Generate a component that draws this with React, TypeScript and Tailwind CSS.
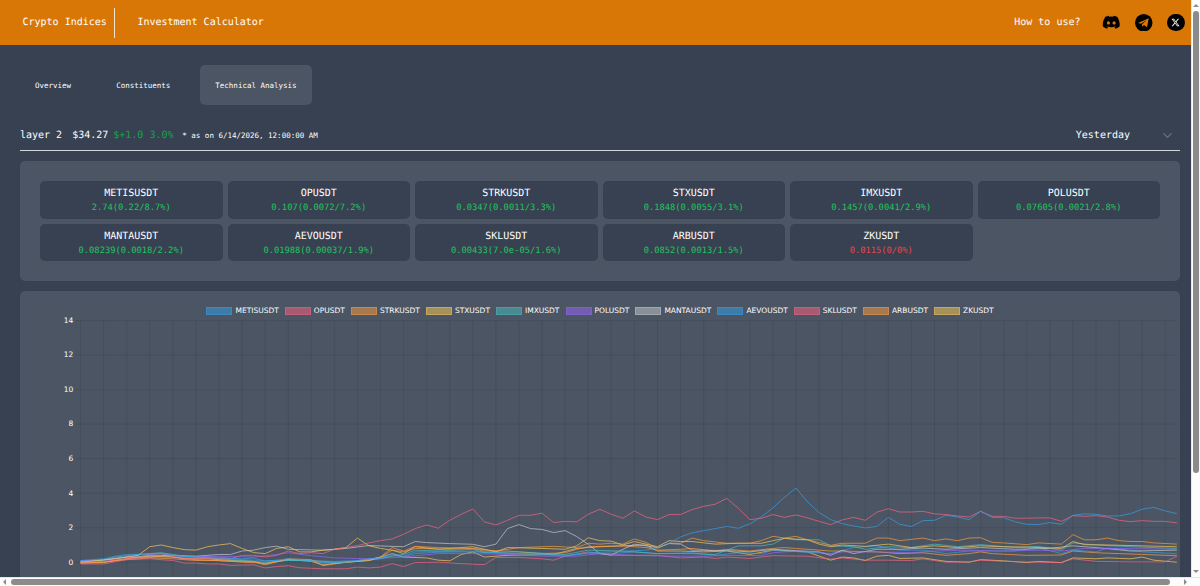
import React, { useState } from "react";
import clsx from "clsx";
import { FaDiscord, FaXTwitter } from "react-icons/fa6";
import { FiChevronDown } from "react-icons/fi";

type Coin = {
  symbol: string;
  value: string;
  up: boolean;
};

type Series = {
  symbol: string;
  color: string;
  // [sample index, percent change]
  points: [number, number][];
};

const coins: Coin[] = [
  { symbol: "METISUSDT", value: "2.74(0.22/8.7%)", up: true },
  { symbol: "OPUSDT", value: "0.107(0.0072/7.2%)", up: true },
  { symbol: "STRKUSDT", value: "0.0347(0.0011/3.3%)", up: true },
  { symbol: "STXUSDT", value: "0.1848(0.0055/3.1%)", up: true },
  { symbol: "IMXUSDT", value: "0.1457(0.0041/2.9%)", up: true },
  { symbol: "POLUSDT", value: "0.07605(0.0021/2.8%)", up: true },
  { symbol: "MANTAUSDT", value: "0.08239(0.0018/2.2%)", up: true },
  { symbol: "AEVOUSDT", value: "0.01988(0.00037/1.9%)", up: true },
  { symbol: "SKLUSDT", value: "0.00433(7.0e-05/1.6%)", up: true },
  { symbol: "ARBUSDT", value: "0.0852(0.0013/1.5%)", up: true },
  { symbol: "ZKUSDT", value: "0.0115(0/0%)", up: false },
];

const series: Series[] = [
  {
    symbol: "METISUSDT",
    color: "#36a2eb",
    points: [
      [0, 0.1], [2, 0.2], [3, 0.35], [4, 0.45], [6, 0.48], [7, 0.5], [8, 0.4], [10, 0.3], [12, 0.25], [14, 0.2],
      [15, 0.25], [16, 0.05], [18, 0.2], [20, 0.1], [21, -0.02], [23, 0], [25, 0.2], [26, 0.25], [27, 0.5], [28, 0.35],
      [29, 0.6], [32, 0.62], [34, 0.65], [36, 0.55], [40, 0.45], [42, 0.35], [44, 0.55], [46, 0.6], [49, 0.7], [50, 0.85],
      [51, 1.1], [52, 1.47], [53, 1.7], [54, 1.83], [55, 1.95], [56, 2.07], [57, 1.97], [58, 2.22], [59, 2.63], [60, 3.15],
      [61, 3.76], [62, 4.3], [63, 3.5], [64, 2.88], [65, 2.47], [66, 2.24], [67, 2.1], [68, 1.99], [69, 2.07], [70, 2.6],
      [71, 2.2], [72, 2.07], [73, 2.41], [74, 2.43], [75, 2.72], [76, 2.62], [77, 2.47], [78, 2.95], [79, 2.6], [80, 2.58],
      [81, 2.34], [82, 2.2], [83, 2.18], [84, 2.3], [85, 2.2], [86, 2.72], [87, 2.8], [88, 2.78], [89, 2.68], [90, 2.68],
      [91, 2.82], [92, 3.07], [93, 3.18], [94, 2.97], [95, 2.82],
    ],
  },
  {
    symbol: "OPUSDT",
    color: "#ff6384",
    points: [
      [0, 0], [2, 0.05], [4, 0.2], [5, 0.25], [6, 0.5], [7, 0.5], [9, 0.2], [10, 0.2], [13, 0.2], [14, 0.4], [15, 0.4],
      [16, 0.3], [17, 0.4], [18, 0.65], [19, 0.5], [20, 0.55], [21, 0.5], [22, 0.75], [23, 0.85], [24, 0.97], [25, 1.12],
      [26, 1.25], [27, 1.35], [28, 1.62], [29, 1.95], [30, 2.16], [31, 1.97], [32, 2.43], [33, 2.78], [34, 3.09], [35, 2.34],
      [36, 2.16], [37, 2.43], [38, 2.72], [39, 2.72], [40, 2.84], [41, 2.3], [42, 2.37], [43, 2.34], [44, 2.78], [45, 3.07],
      [46, 2.78], [47, 2.55], [48, 2.97], [49, 2.62], [50, 2.47], [51, 2.76], [52, 2.76], [53, 3.05], [54, 3.24], [55, 3.36],
      [56, 3.7], [57, 3.13], [58, 2.47], [59, 2.55], [60, 2.76], [61, 2.6], [62, 2.74], [63, 2.57], [64, 2.37], [65, 2.18],
      [66, 2.45], [67, 2.6], [68, 2.43], [69, 2.9], [70, 3.1], [71, 2.91], [72, 2.91], [73, 2.95], [74, 2.8], [75, 2.76],
      [76, 2.68], [77, 2.62], [78, 2.95], [79, 2.66], [80, 2.66], [81, 2.55], [82, 2.55], [83, 2.57], [84, 2.57], [85, 2.37],
      [86, 2.7], [87, 2.66], [88, 2.7], [89, 2.62], [90, 2.43], [91, 2.35], [92, 2.41], [93, 2.37], [94, 2.37], [95, 2.28],
    ],
  },
  {
    symbol: "STRKUSDT",
    color: "#ff9f40",
    points: [
      [0, -0.05], [2, -0.02], [4, 0.2], [6, 0.35], [8, 0.3], [10, 0.15], [13, 0.05], [15, 0.02], [16, -0.15], [18, 0.2],
      [20, 0.15], [21, -0.2], [23, 0], [25, 0.1], [26, 0.3], [27, 0.85], [28, 0.65], [29, 0.92], [31, 0.85], [34, 0.8],
      [36, 0.65], [38, 0.85], [41, 0.92], [43, 0.85], [44, 1.1], [45, 1.05], [46, 1.1], [47, 1.05], [48, 1.35], [49, 1.15],
      [50, 0.8], [51, 1.1], [52, 1.1], [53, 1.4], [54, 1.25], [56, 1.1], [58, 1.1], [59, 1.25], [60, 1.5], [61, 1.4],
      [62, 1.5], [63, 1.3], [65, 0.98], [66, 1.1], [68, 1.1], [69, 1.4], [70, 1.4], [71, 1.25], [73, 1.4], [74, 1.25],
      [75, 1.35], [76, 1.25], [77, 1.4], [78, 1.42], [79, 1.15], [80, 1.12], [82, 1.02], [83, 1.12], [85, 1.05], [86, 1.6],
      [87, 1.3], [88, 1.3], [89, 1.4], [90, 1.25], [91, 1.2], [92, 1.2], [93, 1.12], [95, 1.05],
    ],
  },
  {
    symbol: "STXUSDT",
    color: "#ffcd56",
    points: [
      [0, 0], [3, 0.2], [5, 0.4], [6, 0.9], [7, 1], [8, 0.85], [9, 0.73], [10, 0.7], [11, 0.9], [12, 1], [13, 1.08],
      [14, 0.8], [15, 0.56], [16, 0.5], [17, 0.8], [18, 0.9], [19, 0.6], [20, 0.6], [21, 0.7], [22, 0.75], [23, 0.85],
      [24, 1.4], [25, 0.95], [26, 0.8], [27, 0.7], [28, 0.5], [29, 0.9], [31, 0.75], [34, 0.9], [36, 0.6], [37, 0.85],
      [40, 0.8], [42, 0.75], [43, 0.95], [44, 1.42], [45, 1.25], [46, 1.22], [47, 1], [48, 1.2], [50, 0.9], [51, 1.25],
      [52, 1.2], [53, 1.2], [55, 1.05], [57, 1.1], [59, 1.1], [60, 1.25], [61, 1.38], [63, 1.3], [64, 1.05], [65, 0.9],
      [66, 1], [68, 0.92], [70, 1.05], [72, 0.85], [74, 0.95], [76, 0.85], [78, 0.95], [80, 0.9], [82, 0.88], [85, 0.8],
      [86, 1.2], [87, 1.02], [89, 1], [92, 0.95], [95, 0.9],
    ],
  },
  {
    symbol: "IMXUSDT",
    color: "#4bc0c0",
    points: [
      [0, 0], [2, 0.12], [3, 0.3], [5, 0.45], [7, 0.55], [9, 0.35], [11, 0.25], [13, 0.15], [16, 0], [18, 0.1], [20, 0.1],
      [21, -0.05], [23, 0], [24, 0.05], [26, 0.2], [27, 0.35], [28, 0.45], [29, 0.7], [31, 0.65], [34, 0.75], [35, 0.55],
      [38, 0.6], [42, 0.45], [44, 0.7], [47, 0.65], [50, 0.5], [53, 0.5], [55, 0.45], [57, 0.95], [59, 0.95], [60, 1.05],
      [61, 1.4], [62, 1.3], [64, 1.3], [65, 0.95], [67, 0.9], [68, 0.75], [70, 0.9], [72, 0.85], [74, 1.05], [76, 0.9],
      [78, 1.02], [81, 0.85], [83, 0.92], [85, 0.7], [86, 1.12], [88, 1], [91, 0.9], [95, 0.8],
    ],
  },
  {
    symbol: "POLUSDT",
    color: "#9966ff",
    points: [
      [0, 0.05], [3, 0.2], [5, 0.4], [7, 0.5], [9, 0.3], [12, 0.35], [15, 0.3], [17, 0.45], [18, 0.55], [20, 0.38],
      [22, 0.25], [25, 0.2], [28, 0.3], [31, 0.5], [34, 0.5], [37, 0.45], [40, 0.35], [43, 0.35], [45, 0.5], [48, 0.4],
      [51, 0.35], [54, 0.35], [56, 0.4], [59, 0.38], [60, 0.55], [62, 0.65], [64, 0.6], [65, 0.45], [66, 0.6], [69, 0.6],
      [72, 0.55], [74, 0.65], [77, 0.7], [80, 0.65], [83, 0.7], [85, 0.65], [87, 0.8], [90, 0.8], [95, 0.75],
    ],
  },
  {
    symbol: "MANTAUSDT",
    color: "#c9cbcf",
    points: [
      [0, 0.05], [2, 0.15], [4, 0.3], [6, 0.3], [8, 0.4], [10, 0.35], [12, 0.45], [13, 0.45], [14, 0.65], [15, 0.7],
      [16, 0.85], [17, 0.93], [18, 0.75], [19, 0.73], [21, 0.7], [23, 0.8], [25, 0.97], [27, 0.92], [28, 0.9], [29, 1.2],
      [30, 1.14], [32, 1.08], [34, 1.04], [35, 0.9], [36, 1.05], [37, 1.95], [38, 2.18], [39, 1.95], [40, 1.9], [41, 1.72],
      [42, 1.83], [43, 1.49], [44, 1.04], [45, 0.5], [46, 0.42], [47, 0.75], [48, 1.05], [50, 0.85], [51, 1.08], [52, 1.05],
      [53, 0.7], [56, 0.68], [58, 0.6], [60, 0.75], [64, 0.6], [65, 0.4], [66, 0.7], [67, 0.5], [69, 0.75], [71, 0.75],
      [73, 0.82], [75, 0.75], [78, 0.85], [81, 0.75], [84, 0.8], [86, 0.95], [88, 0.85], [91, 0.65], [95, 0.7],
    ],
  },
  {
    symbol: "AEVOUSDT",
    color: "#36a2eb",
    points: [
      [0, 0.1], [2, 0.1], [4, 0.3], [6, 0.3], [9, 0.3], [12, 0.3], [14, 0.15], [16, 0.1], [19, 0.1], [22, 0.05], [24, 0.1],
      [26, 0.25], [27, 0.4], [28, 0.3], [29, 0.5], [31, 0.58], [34, 0.6], [37, 0.5], [40, 0.5], [42, 0.4], [44, 0.5],
      [46, 0.5], [48, 0.6], [50, 0.5], [53, 0.55], [55, 0.4], [57, 0.55], [59, 0.5], [60, 0.7], [62, 0.62], [65, 0.5],
      [67, 0.85], [69, 0.95], [71, 0.7], [73, 0.7], [75, 0.5], [77, 0.65], [79, 0.65], [81, 0.65], [83, 0.85], [85, 0.5],
      [86, 0.7], [88, 0.6], [89, 0.82], [91, 0.7], [92, 0.6], [95, 0.5],
    ],
  },
  {
    symbol: "SKLUSDT",
    color: "#ff6384",
    points: [
      [0, -0.1], [2, -0.1], [4, 0.15], [6, 0.2], [8, 0.1], [9, -0.05], [10, -0.05], [11, -0.1], [12, -0.1], [13, -0.18],
      [15, -0.15], [16, -0.33], [17, -0.25], [18, -0.2], [19, -0.32], [21, -0.38], [23, -0.38], [24, -0.28], [25, -0.33],
      [26, -0.28], [27, -0.08], [28, -0.25], [29, -0.02], [31, 0], [33, -0.08], [35, -0.14], [36, 0.28], [38, 0.28],
      [40, 0.2], [41, 0.12], [42, 0.35], [44, 0.6], [46, 0.4], [50, 0.4], [52, 0.25], [54, 0.3], [55, 0.22], [56, 0.3],
      [58, 0.22], [60, 0.38], [63, 0.35], [65, 0.18], [66, 0.25], [68, 0.12], [70, 0.12], [72, 0.1], [73, 0.2], [75, 0],
      [77, 0.02], [78, 0.12], [80, 0.05], [83, 0], [85, -0.02], [86, 0.2], [88, 0.05], [91, 0.02], [94, 0.02], [95, 0.35],
    ],
  },
  {
    symbol: "ARBUSDT",
    color: "#ff9f40",
    points: [
      [0, -0.05], [2, 0], [3, 0.1], [6, 0.25], [8, 0.2], [10, 0.1], [12, 0.1], [14, 0], [16, -0.05], [18, 0.15], [20, 0.1],
      [22, 0], [24, 0.05], [26, 0.3], [27, 0.7], [28, 0.6], [29, 0.8], [32, 0.75], [34, 0.8], [35, 0.65], [37, 0.65],
      [40, 0.5], [42, 0.55], [43, 0.75], [44, 0.9], [47, 0.95], [49, 0.85], [50, 0.7], [52, 0.75], [53, 0.8], [55, 0.65],
      [56, 0.75], [58, 0.65], [60, 0.8], [61, 0.85], [62, 0.8], [65, 0.65], [66, 0.65], [69, 0.6], [71, 0.5], [73, 0.55],
      [75, 0.4], [77, 0.5], [78, 0.6], [79, 0.5], [82, 0.4], [85, 0.42], [86, 0.65], [88, 0.55], [90, 0.5], [95, 0.38],
    ],
  },
  {
    symbol: "ZKUSDT",
    color: "#ffcd56",
    points: [
      [0, 0], [2, 0], [3, 0.1], [6, 0.4], [7, 0.4], [9, 0.2], [11, 0.2], [13, 0.1], [15, 0.05], [16, -0.1], [18, 0.15],
      [20, 0.05], [21, -0.15], [23, 0], [25, 0.1], [27, 0.5], [28, 0.3], [30, 0.25], [31, 0.12], [32, 0.08], [33, 0.45],
      [34, 0.6], [35, 0.3], [37, 0.4], [41, 0.45], [43, 0.8], [45, 0.9], [47, 0.95], [49, 1], [50, 0.65], [52, 0.65],
      [54, 0.6], [56, 0.65], [58, 0.45], [60, 0.7], [63, 0.6], [65, 0.12], [66, 0.3], [67, 0.25], [68, 0.1], [69, 0.35],
      [70, 0.4], [71, 0.22], [73, 0.25], [74, 0.15], [75, 0.05], [77, 0], [78, 0.15], [80, 0.08], [82, -0.02], [83, 0.05],
      [85, -0.02], [86, 0.25], [88, 0.2], [89, 0.25], [91, 0.2], [92, 0.3], [93, 0.12], [95, 0],
    ],
  },
];

// Plot geometry, relative to the chart area
const LEFT = 60.5;
const TOP = 1.6;
const STEP_X = 11.54;
const UNIT_Y = 17.26;
const xAt = (i: number) => LEFT + i * STEP_X;
const yAt = (v: number) => TOP + (14 - v) * UNIT_Y;

const TelegramIcon = ({ className }: { className?: string }) => (
  <svg viewBox="0 0 24 24" className={className}>
    <circle cx="12" cy="12" r="12" fill="#000" />
    <path
      d="M4.2 12.2 18.9 5.9 16.4 18.2 12.3 15.2 10 17.6 9.5 14.4 16 8.3 8.2 13.4Z"
      fill="#d97706"
    />
  </svg>
);

const Header = () => {
  return (
    <header className="flex h-[45px] shrink-0 items-center bg-[#d97706] pl-[22.5px] pr-[6px] text-[10px] text-white">
      <div className="flex h-[30px] items-center border-r border-white/80 pr-[7.3px]">
        Crypto Indices
      </div>
      <p className="pl-[22.3px]">Investment Calculator</p>
      <div className="ml-auto flex items-center">
        <p className="mr-[21.5px]">How to use?</p>
        <FaDiscord className="mr-[14.5px] size-[18.5px] text-black" />
        <TelegramIcon className="mr-[14.5px] size-[17.5px]" />
        <span className="flex size-[17.5px] items-center justify-center rounded-full bg-black">
          <FaXTwitter className="size-[9px] text-white" />
        </span>
      </div>
    </header>
  );
};

const tabs = ["Overview", "Constituents", "Technical Analysis"];

const Tabs = () => {
  const [selected, setSelected] = useState<string>("Technical Analysis");

  return (
    <div className="flex gap-[15px] pt-5 text-[7.5px]">
      {tabs.map((tab) => (
        <button
          key={tab}
          onClick={() => setSelected(tab)}
          className={clsx(
            "h-10 rounded-[5px] px-[15px] pt-px",
            selected === tab && "bg-[#4b5563]"
          )}
        >
          {tab}
        </button>
      ))}
    </div>
  );
};

const Summary = () => {
  return (
    <div className="mt-[15px] flex h-[31px] items-center border-b border-gray-300 text-[10px]">
      <p>layer 2</p>
      <p className="ml-[10px]">$34.27</p>
      <p className="ml-[5px] text-[#16a34a]">$+1.0 3.0%</p>
      <p className="ml-[8.8px] pt-px text-[7.5px]">* as on 6/14/2026, 12:00:00 AM</p>
      <div className="ml-auto flex items-center pr-[5px]">
        <span>Yesterday</span>
        <FiChevronDown className="ml-[30px] size-[15px] text-[#6b7280]" />
      </div>
    </div>
  );
};

const CoinGrid = () => {
  return (
    <div className="mt-[10px] grid grid-cols-6 gap-[5px] rounded-[5px] bg-[#4b5563] p-5">
      {coins.map((coin) => (
        <div
          key={coin.symbol}
          className="flex h-[37.5px] flex-col items-center rounded-[5px] bg-[#374151] pt-[5px]"
        >
          <p className="text-[10px] leading-[15px]">{coin.symbol}</p>
          <p
            className={clsx(
              "text-[8.75px] leading-[14px]",
              coin.up ? "text-[#22c55e]" : "text-[#ef4444]"
            )}
          >
            {coin.value}
          </p>
        </div>
      ))}
    </div>
  );
};

const Chart = () => {
  return (
    <div className="mt-[10px] h-[400px] rounded-[5px] bg-[#4b5563] pt-[15px] font-['DejaVu_Sans',sans-serif] text-[7.5px]">
      <div className="flex h-[9px] items-center justify-center gap-[6.05px]">
        {series.map((s) => (
          <div key={s.symbol} className="flex items-center gap-[3px]">
            <span
              className="h-[8px] w-[26px] border"
              style={{ backgroundColor: s.color + "80", borderColor: s.color + "60" }}
            />
            <span className="leading-[9px]">{s.symbol}</span>
          </div>
        ))}
      </div>
      <svg className="mt-[4px] block h-[340px] w-[1160px] overflow-visible" fill="none">
        {Array.from({ length: 48 }, (_, i) => (
          <line key={i} x1={xAt(i * 2)} x2={xAt(i * 2)} y1={TOP} y2={340} stroke="#000" strokeOpacity={0.1} strokeWidth={0.8} />
        ))}
        {[14, 12, 10, 8, 6, 4, 2, 0].map((tick) => (
          <g key={tick}>
            <line x1={LEFT - 5} x2={xAt(95)} y1={yAt(tick)} y2={yAt(tick)} stroke="#000" strokeOpacity={0.1} strokeWidth={0.8} />
            <text x={53.3} y={yAt(tick) + 2.3} textAnchor="end" fill="#fff">
              {tick}
            </text>
          </g>
        ))}
        {[...series].reverse().map((s) => (
          <polyline
            key={s.symbol}
            points={s.points.map(([i, v]) => `${xAt(i)},${yAt(v)}`).join(" ")}
            stroke={s.color}
            strokeOpacity={0.85}
            strokeWidth={0.8}
          />
        ))}
      </svg>
    </div>
  );
};

const VerticalScrollbar = () => {
  return (
    <div className="flex w-[9.5px] shrink-0 flex-col items-center border-l border-gray-200 bg-[#fcfcfc] pb-1 pt-1">
      <span className="border-x-[3px] border-b-[3px] border-x-transparent border-b-[#8b8b8b]" />
      <span className="mt-[4px] h-[462px] w-[6px] rounded-full bg-[#8b8b8b]" />
      <span className="mt-auto border-x-[3px] border-t-[3px] border-x-transparent border-t-[#8b8b8b]" />
    </div>
  );
};

const HorizontalScrollbar = () => {
  return (
    <div className="flex h-[9.5px] shrink-0 items-center border-t border-gray-200 bg-[#fcfcfc] pl-[3px] pr-[13px]">
      <span className="border-y-[3px] border-r-[3px] border-y-transparent border-r-[#8b8b8b]" />
      <span className="ml-[5px] h-[6px] w-[1159px] rounded-full bg-[#8b8b8b]" />
      <span className="ml-auto border-y-[3px] border-l-[3px] border-y-transparent border-l-[#8b8b8b]" />
    </div>
  );
};

const App = () => {
  return (
    <div className="flex h-[586px] w-[1200px] flex-col overflow-hidden font-['DejaVu_Sans_Mono',monospace] text-white [text-rendering:geometricPrecision]">
      <div className="flex min-h-0 flex-1">
        <div className="flex min-w-0 flex-1 flex-col overflow-hidden bg-[#374151]">
          <Header />
          <main className="w-[1180px] pl-5">
            <Tabs />
            <Summary />
            <CoinGrid />
            <Chart />
          </main>
        </div>
        <VerticalScrollbar />
      </div>
      <HorizontalScrollbar />
    </div>
  );
};

export default App;
